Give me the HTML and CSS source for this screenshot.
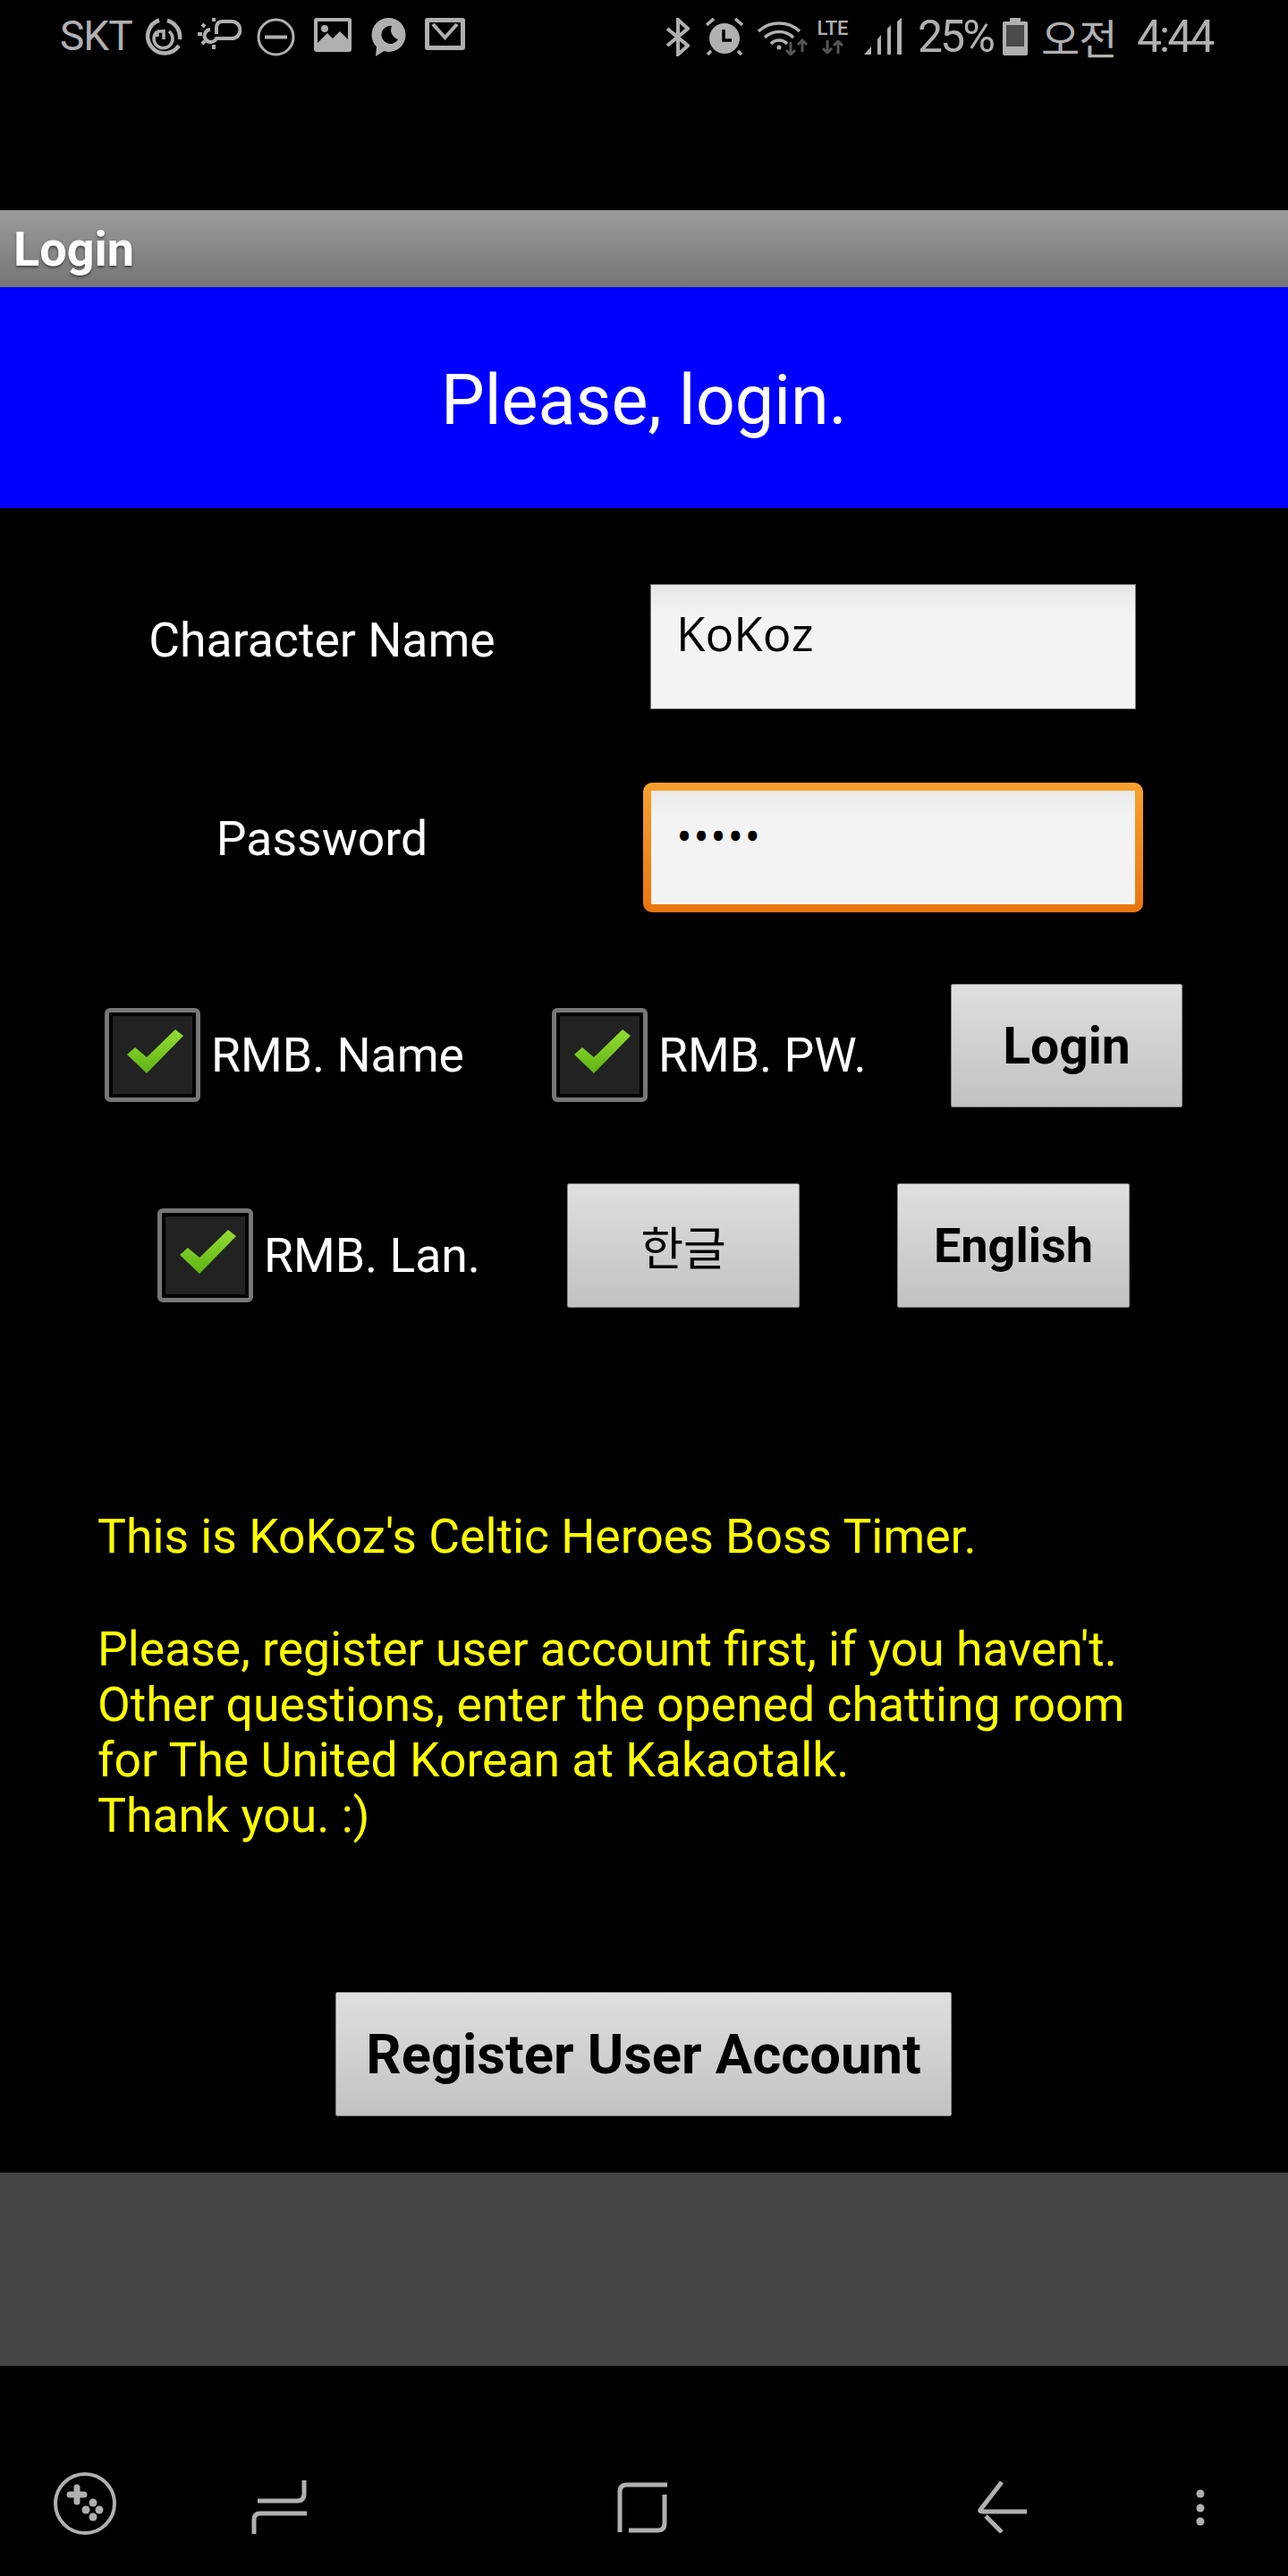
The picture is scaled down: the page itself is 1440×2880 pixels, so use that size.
FILE: index.html
```html
<!DOCTYPE html>
<html lang="ko">
<head>
  <meta charset="UTF-8" />
  <title>Login</title>
  <link rel="stylesheet" href="styles.css">
</head>
<body>

<div class="status-bar">
  <span class="carrier">SKT</span>
  <svg class="ic" style="margin-left:10px" width="43" height="43" viewBox="0 0 43 43" fill="none" stroke="#b0b0b0" stroke-width="4.500">
    <path d="M26 3 A19 19 0 0 1 40 24"/>
    <path d="M39 31 A19 19 0 1 1 17 2.500"/>
    <path d="M15 15 A10.500 10.500 0 1 0 28 15 M15 15 V21 M15 15 H21 M22 13 V24" stroke-width="3.500"/>
  </svg>
  <svg class="ic" style="margin-left:17px" width="49" height="35" viewBox="0 0 49 35" fill="none" stroke="#b0b0b0" stroke-width="4">
    <path d="M14 13 A7 7 0 1 0 21 23 H38 A9.500 9.500 0 0 0 38 4 H28 Q21 4 21 11 V18"/>
    <path d="M0 18 H5 M18 30 V35 M5 7 L8 10 M5 29 L8 26 M18 0 V4"/>
  </svg>
  <svg class="ic" style="margin-left:17px" width="43" height="43" viewBox="0 0 43 43" fill="none" stroke="#b0b0b0" stroke-width="3">
    <circle cx="21.500" cy="21.500" r="19.500"/>
    <path d="M9 21.500 H34" stroke-width="4"/>
  </svg>
  <svg class="ic" style="margin-left:21px" width="42" height="38" viewBox="0 0 42 38">
    <rect width="42" height="38" rx="3" fill="#b0b0b0"/>
    <rect x="4" y="4" width="34" height="30" fill="#000"/>
    <circle cx="12" cy="12" r="4" fill="#b0b0b0"/>
    <path d="M4 28 L15 17 L21 23 L29 15 L38 24 V35 H4 Z" fill="#b0b0b0"/>
  </svg>
  <svg class="ic" style="margin-left:18px" width="47" height="43" viewBox="0 0 47 43">
    <circle cx="23.500" cy="19" r="19" fill="#b0b0b0"/>
    <path d="M10 32 L9 43 L20 36 Z" fill="#b0b0b0"/>
    <path d="M27 9 A10 10 0 1 0 34 24 A11 11 0 0 1 27 9 Z" fill="#000"/>
  </svg>
  <svg class="ic" style="margin-left:17px" width="45" height="36" viewBox="0 0 45 36">
    <rect width="45" height="36" rx="3" fill="#b0b0b0"/>
    <rect x="5" y="5" width="35" height="26" fill="#000"/>
    <path d="M9 7 L22.500 22 L36 7" fill="none" stroke="#b0b0b0" stroke-width="4"/>
  </svg>

  <svg class="ic ic-bt" width="27" height="43" viewBox="0 0 27 43" fill="none" stroke="#b0b0b0" stroke-width="4">
    <path d="M2 12 L25 31 L14 41 V2 L25 12 L2 31"/>
  </svg>
  <svg class="ic" style="margin-left:18px" width="42" height="42" viewBox="0 0 42 42">
    <circle cx="21" cy="23" r="17" fill="#b0b0b0"/>
    <path d="M1 8 L9 1 M33 1 L41 8 M6 37 L2 41 M36 37 L40 41" stroke="#b0b0b0" stroke-width="3.500"/>
    <path d="M20 13 V25 H29" fill="none" stroke="#000" stroke-width="3.500"/>
  </svg>
  <svg class="ic" style="margin-left:16px" width="57" height="42" viewBox="0 0 57 42" fill="none">
    <path d="M1 15 A34 34 0 0 1 47 15 M8 22 A23 23 0 0 1 40 22 M15 29 A12 12 0 0 1 33 29" stroke="#b0b0b0" stroke-width="3.500"/>
    <circle cx="24" cy="33" r="2.500" fill="#b0b0b0"/>
    <path d="M37 27 V41 M32 36 L37 41 L42 36" stroke="#555" stroke-width="3"/>
    <path d="M50 38 V25 M45 30 L50 25 L55 30" stroke="#555" stroke-width="3"/>
  </svg>
  <div class="lte">
    <span class="lte-text">LTE</span>
    <svg width="24" height="15" viewBox="0 0 24 15" fill="none" stroke="#555" stroke-width="3">
      <path d="M6 0 V14 M1 9 L6 14 L11 9"/>
      <path d="M18 15 V1 M13 6 L18 1 L23 6"/>
    </svg>
  </div>
  <svg class="ic" style="margin-left:13px" width="42" height="41" viewBox="0 0 42 41" fill="#b0b0b0">
    <path d="M0 41 L8 32 V41 Z"/>
    <path d="M15 41 V24 L19 19 V41 Z"/>
    <path d="M26 41 V12 L30 8 V41 Z"/>
    <path d="M37 41 V4 L42 0 V41 Z"/>
  </svg>
  <span class="status-text percent">25%</span>
  <svg class="ic" style="margin-left:13px" width="28" height="42" viewBox="0 0 28 42">
    <path d="M8 0 H20 V4 H26 Q28 4 28 6 V40 Q28 42 26 42 H2 Q0 42 0 40 V6 Q0 4 2 4 H8 Z" fill="#b0b0b0"/>
    <rect x="4" y="8" width="20" height="24" fill="#4a4a4a"/>
  </svg>
  <span class="status-text ampm">오전</span>
  <span class="status-text clock">4:44</span>
</div>

<div class="title-bar">Login</div>
<div class="banner">Please, login.</div>

<div class="form">
  <div class="field-row first">
    <div class="field-label">Character Name</div>
    <div class="text-box">KoKoz</div>
  </div>
  <div class="field-row second">
    <div class="field-label">Password</div>
    <div class="text-box focused"><span class="dots">•••••</span></div>
  </div>

  <div class="option-row login-row">
    <div class="option name-opt">
      <div class="check">
        <svg width="89" height="87" viewBox="0 0 89 87">
          <defs>
            <linearGradient id="tick" x1="0" y1="0" x2="0" y2="1">
              <stop offset="0" stop-color="#93dc33"/>
              <stop offset="1" stop-color="#5fb414"/>
            </linearGradient>
          </defs>
          <polygon points="16,43 25,35 38,46 70,15 79,22 38,64" fill="url(#tick)"/>
        </svg>
      </div>
      <span>RMB. Name</span>
    </div>
    <div class="option pw-opt">
      <div class="check">
        <svg width="89" height="87" viewBox="0 0 89 87"><polygon points="16,43 25,35 38,46 70,15 79,22 38,64" fill="url(#tick)"/></svg>
      </div>
      <span>RMB. PW.</span>
    </div>
    <button class="btn login-btn">Login</button>
  </div>

  <div class="option-row lang-row">
    <div class="option lan-opt">
      <div class="check">
        <svg width="89" height="87" viewBox="0 0 89 87"><polygon points="16,43 25,35 38,46 70,15 79,22 38,64" fill="url(#tick)"/></svg>
      </div>
      <span>RMB. Lan.</span>
    </div>
    <button class="btn lang-btn korean">한글</button>
    <button class="btn lang-btn english">English</button>
  </div>

  <div class="notice">
    <p>This is KoKoz's Celtic Heroes Boss Timer.</p>
    <p>Please, register user account first, if you haven't.<br>
    Other questions, enter the opened chatting room<br>
    for The United Korean at Kakaotalk.<br>
    Thank you. :)</p>
  </div>

  <button class="btn register-btn">Register User Account</button>
</div>

<div class="footer-band"></div>

<div class="nav-bar">
  <svg class="nav-game" width="70" height="70" viewBox="0 0 70 70" fill="none">
    <circle cx="35" cy="35" r="33" stroke="#b0b0b0" stroke-width="4"/>
    <path d="M26 17 V33 M18 25 H34" stroke="#b0b0b0" stroke-width="7" stroke-linecap="round"/>
    <circle cx="44" cy="34" r="4.500" fill="#b0b0b0"/>
    <circle cx="36" cy="42" r="4.500" fill="#b0b0b0"/>
    <circle cx="51" cy="42" r="4.500" fill="#b0b0b0"/>
    <circle cx="44" cy="50" r="4.500" fill="#b0b0b0"/>
  </svg>
  <svg class="nav-recent" width="62" height="60" viewBox="0 0 62 60" fill="none" stroke="#b0b0b0" stroke-width="5">
    <path d="M7 23 H51 Q59 23 59 15 V0"/>
    <path d="M3 60 V44 Q3 37 10 37 H62"/>
  </svg>
  <svg class="nav-home" width="56" height="57" viewBox="0 0 56 57" fill="none" stroke="#b0b0b0" stroke-width="5">
    <path d="M3 56 V11 Q3 3 11 3 H56"/>
    <path d="M13 54 H45 Q53 54 53 46 V14"/>
  </svg>
  <svg class="nav-back" width="55" height="58" viewBox="0 0 55 58" fill="none" stroke="#b0b0b0" stroke-width="5">
    <path d="M27 1 L3 32 Q2 34 6 34 H55"/>
    <path d="M9 39 L27 57"/>
  </svg>
  <svg class="nav-menu" width="10" height="42" viewBox="0 0 10 42" fill="#b0b0b0">
    <circle cx="5" cy="5" r="4.500"/>
    <circle cx="5" cy="21" r="4.500"/>
    <circle cx="5" cy="36" r="4.500"/>
  </svg>
</div>

</body>
</html>
```

FILE: styles.css
```css
body {
  margin: 0;
  width: 1440px;
  height: 2880px;
  display: flex;
  flex-direction: column;
  background: #000;
  font-family: Roboto, "Noto Sans CJK KR", sans-serif;
  color: #fff;
}
.status-bar {
  height: 235px;
  box-sizing: border-box;
  padding: 18px 0 0 67px;
  display: flex;
  align-items: flex-start;
  color: #b0b0b0;
}
.ic {
  flex: none;
  margin-top: 2px;
}
.carrier {
  font-size: 46px;
  line-height: 44px;
  letter-spacing: -1px;
  width: 84px;
}
.ic-bt {
  margin-left: 224px;
}
.lte {
  margin-left: 5px;
  width: 44px;
  display: flex;
  flex-direction: column;
  align-items: center;
}
.lte-text {
  font-size: 22px;
  font-weight: 500;
  line-height: 26px;
  margin-top: 1px;
  color: #b0b0b0;
}
.status-text {
  font-size: 50px;
  line-height: 46px;
  letter-spacing: -3px;
}
.percent {
  margin-left: 18px;
  width: 82px;
}
.ampm {
  font-family: "Noto Sans CJK KR", sans-serif;
  font-size: 47px;
  letter-spacing: -1px;
  margin-left: 15px;
  width: 107px;
}
.title-bar {
  height: 86px;
  box-sizing: border-box;
  padding-left: 15px;
  background: linear-gradient(#9b9b9b, #757575);
  font-size: 54px;
  font-weight: 700;
  line-height: 88px;
  text-shadow: 0 2px 3px #444;
}
.banner {
  height: 247px;
  background: #0000ff;
  font-size: 77.300px;
  line-height: 254px;
  text-align: center;
}
.form {
  flex: 1;
  display: flex;
  flex-direction: column;
}
.field-row {
  display: flex;
  align-items: flex-start;
}
.first {
  margin-top: 85px;
}
.second {
  margin-top: 82px;
}
.field-label {
  width: 720px;
  font-size: 53.500px;
  line-height: 60px;
  padding-top: 33px;
  text-align: center;
}
.text-box {
  box-sizing: border-box;
  width: 543px;
  height: 140px;
  margin-left: 7px;
  padding: 20px 28px;
  background: linear-gradient(#e7e7e7, #f3f3f3 25%);
  border: 1px solid #777;
  color: #000;
  font-family: "Open Sans", sans-serif;
  font-size: 53px;
  line-height: 68px;
}
.focused {
  width: 559px;
  height: 145px;
  margin-left: -1px;
  padding: 14px 28px;
  border: 9px solid transparent;
  border-radius: 10px;
  background:
    linear-gradient(#e9e9e9, #f3f3f3 25%) padding-box,
    linear-gradient(#f9a12e, #e8750f) border-box;
}
.dots {
  font-size: 48px;
  line-height: 60px;
  letter-spacing: 1px;
}
.option-row {
  display: flex;
  align-items: flex-start;
}
.login-row {
  margin-top: 80px;
  padding-left: 117px;
}
.lang-row {
  margin-top: 85px;
  padding-left: 176px;
}
.option {
  display: flex;
  align-items: center;
  gap: 12px;
  margin-top: 27px;
  font-size: 53.500px;
}
.name-opt {
  width: 500px;
}
.pw-opt {
  width: 446px;
}
.lan-opt {
  width: 458px;
  margin-top: 28px;
}
.check {
  box-sizing: border-box;
  width: 107px;
  height: 105px;
  padding: 4px;
  border: 5px solid #777;
  border-radius: 6px;
  background: #222;
  background-clip: content-box;
}
.check svg {
  display: block;
}
.btn {
  box-sizing: border-box;
  padding: 0;
  border: 1px solid #888;
  border-radius: 2px;
  background: linear-gradient(#dfdfdf, #c2c2c2);
  color: #000;
  font-family: Roboto, "Noto Sans CJK KR", sans-serif;
  font-weight: 700;
  font-size: 54px;
}
.login-btn {
  width: 259px;
  height: 138px;
  font-size: 57px;
}
.lang-btn {
  width: 260px;
  height: 139px;
}
.korean {
  font-weight: 400;
  font-size: 52px;
}
.english {
  margin-left: 109px;
}
.notice {
  margin-top: 225px;
  padding-left: 109px;
  color: #ffff00;
  font-size: 53.500px;
  line-height: 62px;
}
.notice p {
  margin: 0 0 64px;
}
.notice p:last-child {
  margin: 0;
}
.register-btn {
  align-self: flex-start;
  margin: 166px 0 0 375px;
  width: 689px;
  height: 139px;
  font-size: 61.500px;
}
.footer-band {
  height: 216px;
  background: #444;
}
.nav-bar {
  height: 235px;
  box-sizing: border-box;
  padding: 119px 0 0 60px;
  display: flex;
  align-items: flex-start;
}
.nav-recent {
  margin: 9px 0 0 151px;
}
.nav-home {
  margin: 11px 0 0 347px;
}
.nav-back {
  margin: 10px 0 0 347px;
}
.nav-menu {
  margin: 19px 0 0 189px;
}
```
